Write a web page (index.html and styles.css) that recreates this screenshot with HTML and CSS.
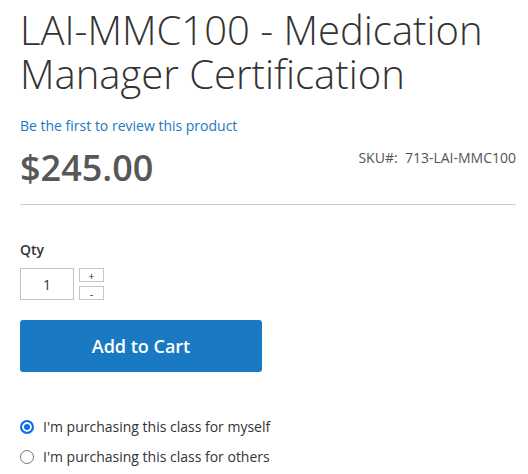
FILE: index.html
```html
<!DOCTYPE html>
<html lang="en">
<head>
<meta charset="utf-8">
<title>LAI-MMC100 - Medication Manager Certification</title>
<link rel="stylesheet" href="styles.css">
</head>
<body>
<main class="product">
  <h1 class="title">LAI-MMC100 - Medication Manager Certification</h1>
  <a class="review" href="#">Be the first to review this product</a>
  <div class="price-row">
    <span class="price">$245.00</span>
    <span class="sku">SKU#:&nbsp; 713-LAI-MMC100</span>
  </div>
  <hr class="divider">
  <label class="qty-label" for="qty">Qty</label>
  <div class="qty-row">
    <input class="qty-input" id="qty" type="text" value="1">
    <div class="qty-steps">
      <button class="step" type="button">+</button>
      <button class="step" type="button">-</button>
    </div>
  </div>
  <button class="cart" type="button">Add to Cart</button>
  <div class="options">
    <label class="option"><input class="radio" type="radio" name="who" checked><span>I'm purchasing this class for myself</span></label>
    <label class="option"><input class="radio" type="radio" name="who"><span>I'm purchasing this class for others</span></label>
  </div>
</main>
</body>
</html>
```

FILE: styles.css
```css
html, body {
  margin: 0;
  padding: 0;
  background: #fff;
}
body {
  font-family: "Open Sans", "Noto Sans", sans-serif;
  color: #333;
  font-size: 14px;
  line-height: 20px;
}
.product {
  padding: 8px 12px 0 20px;
  display: flex;
  flex-direction: column;
  align-items: flex-start;
}
.title {
  margin: 0;
  font-size: 40px;
  line-height: 44px;
  font-weight: 300;
  color: #333;
  letter-spacing: 0;
}
.review {
  margin-top: 20px;
  color: #1979c3;
  text-decoration: none;
  font-size: 14px;
  line-height: 20px;
}
.price-row {
  margin-top: 12px;
  align-self: stretch;
  display: flex;
  justify-content: space-between;
  align-items: flex-start;
}
.price {
  font-size: 36px;
  line-height: 40px;
  font-weight: 600;
  color: #575757;
}
.sku {
  font-size: 14px;
  line-height: 20px;
  color: #555;
}
.divider {
  align-self: stretch;
  margin: 16px 0 0;
  border: 0;
  border-top: 1px solid #ccc;
  height: 0;
}
.qty-label {
  margin-top: 35px;
  font-weight: 600;
  font-size: 14px;
  line-height: 20px;
  color: #333;
}
.qty-row {
  margin-top: 8px;
  display: flex;
  align-items: flex-start;
  gap: 5px;
}
.qty-input {
  box-sizing: border-box;
  width: 54px;
  height: 32px;
  border: 1px solid #c2c2c2;
  padding: 0;
  margin: 0;
  text-align: center;
  font-family: inherit;
  font-size: 14px;
  color: #333;
  background: #fff;
}
.qty-steps {
  display: flex;
  flex-direction: column;
  gap: 4px;
}
.step {
  box-sizing: border-box;
  width: 25px;
  height: 14px;
  margin: 0;
  padding: 0;
  border: 1px solid #c6c6c6;
  background: #fff;
  color: #333;
  font-family: inherit;
  font-size: 11px;
  line-height: 11px;
}
.cart {
  margin-top: 20px;
  width: 242px;
  height: 52px;
  border: 0;
  border-radius: 3px;
  background: #1979c3;
  color: #fff;
  font-family: inherit;
  font-size: 18px;
  font-weight: 600;
  padding: 0;
}
.options {
  margin-top: 40px;
  display: flex;
  flex-direction: column;
}
.option {
  height: 30px;
  display: flex;
  align-items: center;
  font-size: 14px;
  color: #333;
}
.radio {
  appearance: none;
  -webkit-appearance: none;
  box-sizing: border-box;
  width: 14px;
  height: 14px;
  margin: 0 9px 0 0;
  border: 1px solid #767676;
  border-radius: 50%;
  background: #fff;
}
.radio:checked {
  border: 2px solid #0b6cf0;
  background: #0b6cf0;
  box-shadow: inset 0 0 0 2px #fff;
}
```
